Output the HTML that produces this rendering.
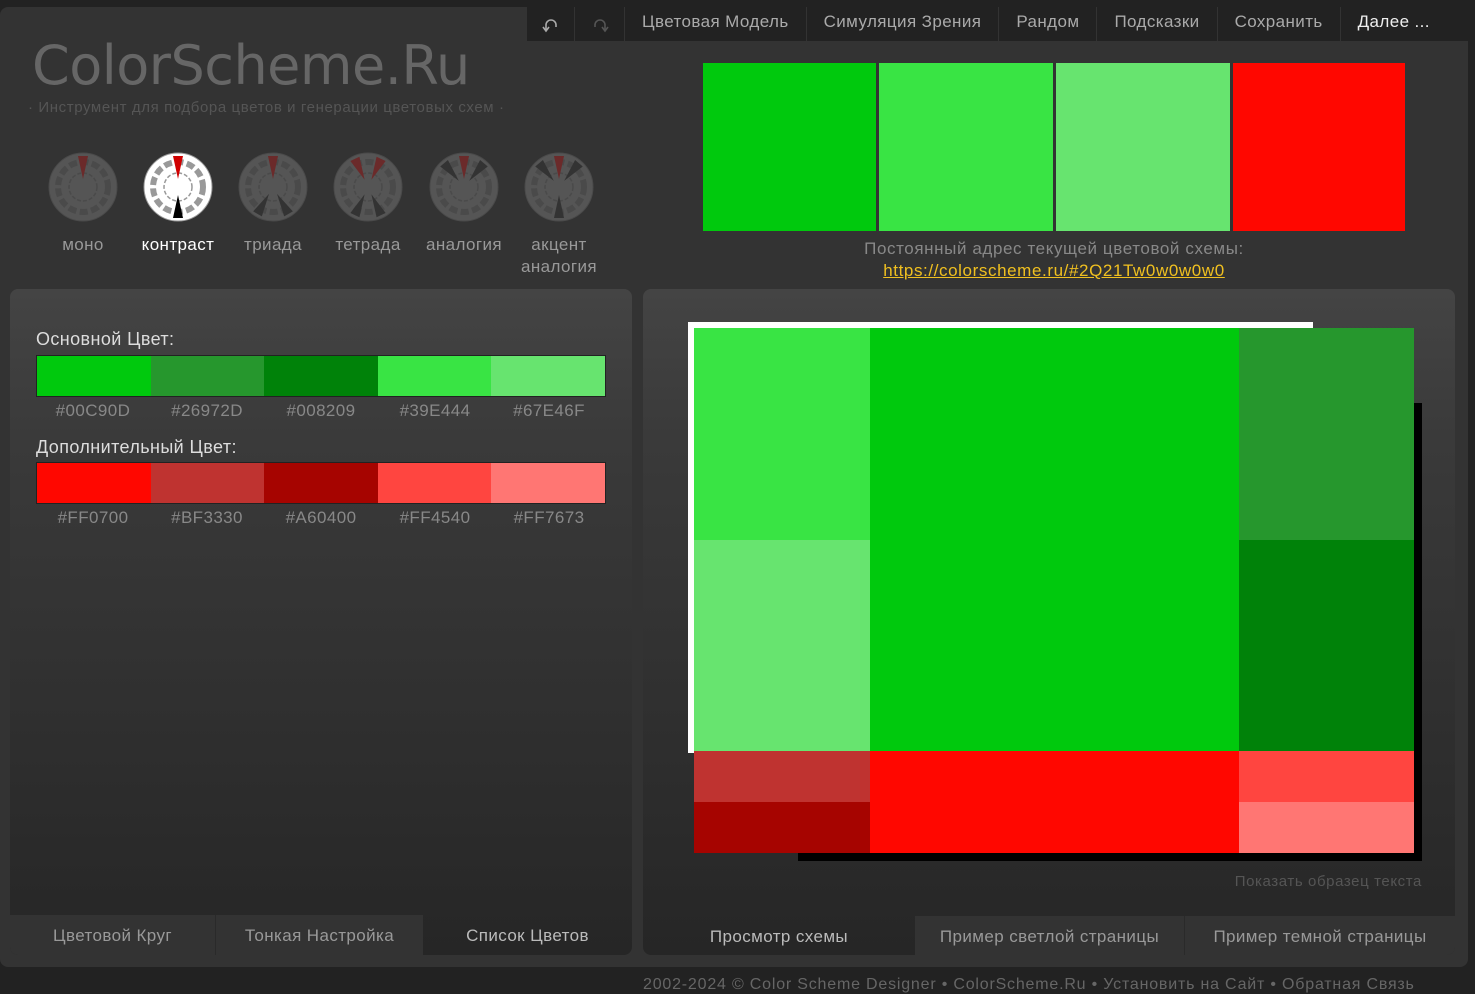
<!DOCTYPE html>
<html><head><meta charset="utf-8">
<style>
*{margin:0;padding:0;box-sizing:border-box}
body{width:1475px;height:987px;background:#222;font-family:"Liberation Sans","DejaVu Sans",sans-serif;position:relative;overflow:hidden;letter-spacing:0.4px}
.abs{position:absolute}
#main{left:0;top:7px;width:1468px;height:960px;background:#333;border-radius:8px}
#nav{left:527px;top:7px;width:941px;height:34px;background:#222;display:flex;color:#aaa;font-size:17px}
#nav div{height:34px;line-height:30px;padding:0 17px;border-right:1px solid #333;white-space:nowrap}
#logo{left:32px;top:34px;font-size:54px;color:#666;font-family:"DejaVu Sans","Liberation Sans",sans-serif;letter-spacing:-0.5px}
#sub{left:28px;top:99px;font-size:15px;color:#555;letter-spacing:0.6px}
.wl{top:234px;width:100px;text-align:center;color:#999;font-size:17px;line-height:22px}
.panel{background:linear-gradient(#444 0,#3a3a3a 150px,#262626 100%);border-radius:8px;overflow:hidden}
.sw{display:flex;height:42px;border:1px solid #222}
.sw div{flex:1}
.lab{display:flex;color:#888;font-size:17px}
.lab div{flex:1;text-align:center}
.h{font-size:18px;color:#ddd}
.tabs{display:flex;height:40px;font-size:17px;color:#999}
.tabs div{text-align:center;line-height:42px}
</style></head><body>
<div id="main" class="abs"></div>
<div id="nav" class="abs">
<div style="width:48px;padding:0;text-align:center"><svg width="18" height="16" viewBox="0 0 18 16" style="margin-top:10px"><path d="M4 13 V8 a5 5 0 0 1 10 0 V10" fill="none" stroke="#aaa" stroke-width="1.6"/><path d="M1 10 L4 14 L7 10" fill="none" stroke="#aaa" stroke-width="1.6"/></svg></div>
<div style="width:50px;padding:0;text-align:center"><svg width="18" height="16" viewBox="0 0 18 16" style="margin-top:10px"><path d="M14 13 V8 a5 5 0 0 0 -10 0 V10" fill="none" stroke="#555" stroke-width="1.6"/><path d="M11 10 L14 14 L17 10" fill="none" stroke="#555" stroke-width="1.6"/></svg></div>
<div>Цветовая Модель</div><div>Симуляция Зрения</div><div>Рандом</div><div>Подсказки</div><div>Сохранить</div><div style="color:#eee;border:none">Далее ...</div>
</div>
<div id="logo" class="abs">ColorScheme.Ru</div>
<div id="sub" class="abs">· Инструмент для подбора цветов и генерации цветовых схем ·</div>

<svg class="abs" style="left:0;top:140px" width="640" height="95">
<defs>
<g id="ring"><circle r="34"/><circle r="25" fill="none" stroke-width="6" stroke-dasharray="8 3.5"/><circle r="14" fill="none" stroke-width="1.5" stroke-dasharray="4 2"/></g>
<path id="wd" d="M-5 -31 L5 -31 L0 -8 Z"/>
</defs>
<g transform="translate(83,47)" fill="#555" stroke="#4a4a4a"><use href="#ring"/><use href="#wd" fill="#6b2a2a" stroke="none"/></g>
<g transform="translate(178,47)" fill="#fff" stroke="#999"><use href="#ring"/><use href="#wd" fill="#d00000" stroke="none"/><use href="#wd" fill="#000" stroke="none" transform="rotate(180)"/></g>
<g transform="translate(273,47)" fill="#555" stroke="#4a4a4a"><use href="#ring"/><use href="#wd" fill="#6b2a2a" stroke="none"/><use href="#wd" fill="#333" stroke="none" transform="rotate(150)"/><use href="#wd" fill="#333" stroke="none" transform="rotate(210)"/></g>
<g transform="translate(368,47)" fill="#555" stroke="#4a4a4a"><use href="#ring"/><use href="#wd" fill="#6b2a2a" stroke="none" transform="rotate(-25)"/><use href="#wd" fill="#6b2a2a" stroke="none" transform="rotate(25)"/><use href="#wd" fill="#333" stroke="none" transform="rotate(155)"/><use href="#wd" fill="#333" stroke="none" transform="rotate(205)"/></g>
<g transform="translate(464,47)" fill="#555" stroke="#4a4a4a"><use href="#ring"/><use href="#wd" fill="#6b2a2a" stroke="none"/><use href="#wd" fill="#333" stroke="none" transform="rotate(-40)"/><use href="#wd" fill="#333" stroke="none" transform="rotate(40)"/></g>
<g transform="translate(559,47)" fill="#555" stroke="#4a4a4a"><use href="#ring"/><use href="#wd" fill="#6b2a2a" stroke="none"/><use href="#wd" fill="#333" stroke="none" transform="rotate(-40)"/><use href="#wd" fill="#333" stroke="none" transform="rotate(40)"/><use href="#wd" fill="#333" stroke="none" transform="rotate(180)"/></g>
</svg>
<div class="wl abs" style="left:33px">моно</div>
<div class="wl abs" style="left:128px;color:#fff">контраст</div>
<div class="wl abs" style="left:223px">триада</div>
<div class="wl abs" style="left:318px">тетрада</div>
<div class="wl abs" style="left:414px">аналогия</div>
<div class="wl abs" style="left:509px">акцент<br>аналогия</div>

<div class="abs" style="left:703px;top:63px;width:173px;height:168px;background:#00C90D"></div>
<div class="abs" style="left:879px;top:63px;width:174px;height:168px;background:#39E444"></div>
<div class="abs" style="left:1056px;top:63px;width:174px;height:168px;background:#67E46F"></div>
<div class="abs" style="left:1233px;top:63px;width:172px;height:168px;background:#FF0700"></div>
<div class="abs" style="left:683px;top:238px;width:742px;text-align:center;color:#888;font-size:17px;line-height:22px;letter-spacing:0.6px">Постоянный адрес текущей цветовой схемы:<br><span style="color:#f0c020;text-decoration:underline">https://colorscheme.ru/#2Q21Tw0w0w0w0</span></div>

<div class="abs panel" style="left:10px;top:289px;width:622px;height:666px">
<div class="abs h" style="left:26px;top:40px">Основной Цвет:</div>
<div class="abs sw" style="left:26px;top:66px;width:570px"><div style="background:#00C90D"></div><div style="background:#26972D"></div><div style="background:#008209"></div><div style="background:#39E444"></div><div style="background:#67E46F"></div></div>
<div class="abs lab" style="left:26px;top:112px;width:570px"><div>#00C90D</div><div>#26972D</div><div>#008209</div><div>#39E444</div><div>#67E46F</div></div>
<div class="abs h" style="left:26px;top:148px">Дополнительный Цвет:</div>
<div class="abs sw" style="left:26px;top:173px;width:570px"><div style="background:#FF0700"></div><div style="background:#BF3330"></div><div style="background:#A60400"></div><div style="background:#FF4540"></div><div style="background:#FF7673"></div></div>
<div class="abs lab" style="left:26px;top:219px;width:570px"><div>#FF0700</div><div>#BF3330</div><div>#A60400</div><div>#FF4540</div><div>#FF7673</div></div>
<div class="abs tabs" style="left:0;top:626px;width:622px"><div style="width:206px;background:#333;border-right:1px solid #2a2a2a">Цветовой Круг</div><div style="width:207px;background:#333">Тонкая Настройка</div><div style="width:209px;color:#bbb">Список Цветов</div></div>
</div>

<div class="abs panel" style="left:643px;top:289px;width:812px;height:666px">
<div class="abs" style="left:155px;top:114px;width:624px;height:458px;background:#000"></div>
<div class="abs" style="left:45px;top:33px;width:625px;height:431px;background:#fff"></div>
<div class="abs" style="left:51px;top:39px;width:176px;height:212px;background:#39E444"></div>
<div class="abs" style="left:51px;top:251px;width:176px;height:211px;background:#67E46F"></div>
<div class="abs" style="left:51px;top:462px;width:176px;height:51px;background:#BF3330"></div>
<div class="abs" style="left:51px;top:513px;width:176px;height:51px;background:#A60400"></div>
<div class="abs" style="left:227px;top:39px;width:369px;height:423px;background:#00C90D"></div>
<div class="abs" style="left:227px;top:462px;width:369px;height:102px;background:#FF0700"></div>
<div class="abs" style="left:596px;top:39px;width:175px;height:212px;background:#26972D"></div>
<div class="abs" style="left:596px;top:251px;width:175px;height:211px;background:#008209"></div>
<div class="abs" style="left:596px;top:462px;width:175px;height:51px;background:#FF4540"></div>
<div class="abs" style="left:596px;top:513px;width:175px;height:51px;background:#FF7673"></div>
<div class="abs" style="right:33px;top:584px;color:#555;font-size:15px;letter-spacing:0.6px">Показать образец текста</div>
<div class="abs tabs" style="left:0;top:627px;width:812px"><div style="width:272px;color:#bbb">Просмотр схемы</div><div style="width:270px;background:#333;border-right:1px solid #2a2a2a">Пример светлой страницы</div><div style="width:270px;background:#333">Пример темной страницы</div></div>
</div>

<div class="abs" style="left:643px;top:976px;color:#666;font-size:16px;white-space:nowrap;letter-spacing:0.8px">2002-2024 © Color Scheme Designer • ColorScheme.Ru • Установить на Сайт • Обратная Связь</div>
</body></html>
